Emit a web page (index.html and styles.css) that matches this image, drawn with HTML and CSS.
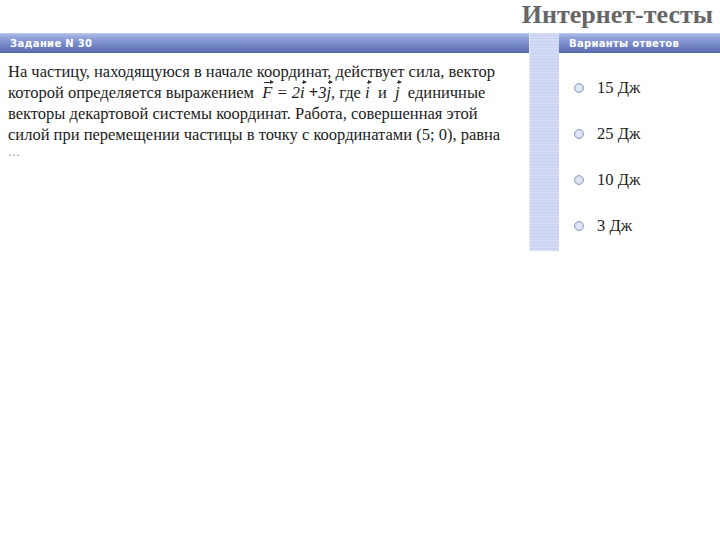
FILE: index.html
```html
<!DOCTYPE html>
<html lang="ru">
<head>
<meta charset="utf-8">
<link rel="stylesheet" href="styles.css">
</head>
<body>
<header class="top">
  <h1 class="brand">Интернет-тесты</h1>
</header>
<main class="board">
  <section class="task">
    <div class="bar"><span class="bar-title">Задание N 30</span></div>
    <p class="question">На частицу, находящуюся в начале координат, действует сила, вектор<br>
    которой определяется выражением&nbsp; <i class="m"><span class="vec">F</span> = 2<span class="vec">i</span> </i><b class="plus">+</b><i class="m">3<span class="vec">j</span></i>, где <i class="m"><span class="vec">i</span></i>&nbsp; и&nbsp; <i class="m"><span class="vec">j</span></i>&nbsp; единичные<br>
    векторы декартовой системы координат. Работа, совершенная этой<br>
    силой при перемещении частицы в точку с координатами (5; 0), равна</p>
    <p class="dots">…</p>
  </section>
  <div class="stripe"></div>
  <section class="answers">
    <div class="bar"><span class="bar-title">Варианты ответов</span></div>
    <ul class="options">
      <li class="opt"><span class="radio"></span>15 Дж</li>
      <li class="opt"><span class="radio"></span>25 Дж</li>
      <li class="opt"><span class="radio"></span>10 Дж</li>
      <li class="opt"><span class="radio"></span>3 Дж</li>
    </ul>
  </section>
</main>
</body>
</html>
```
FILE: styles.css
```css
html, body {
  margin: 0;
  padding: 0;
  background: #ffffff;
}
body {
  width: 720px;
  height: 540px;
  overflow: hidden;
  font-family: "Liberation Serif", "Times New Roman", serif;
  color: #1a1a1a;
}
.top {
  height: 33px;
  display: flex;
  justify-content: flex-end;
  align-items: flex-start;
}
.brand {
  margin: 0;
  padding-right: 7px;
  font-family: "Liberation Serif", serif;
  font-weight: bold;
  font-size: 26px;
  line-height: 29px;
  color: #666666;
}
.board {
  display: flex;
  align-items: flex-start;
}
.task {
  width: 529px;
}
.bar {
  height: 20px;
  background: linear-gradient(to bottom, #c3cff0 0px, #9fb0e0 2px, #8496d2 8px, #6f82c2 13px, #5e70b4 19px, #4f62a8 20px);
  display: flex;
  align-items: center;
}
.bar-title {
  font-family: "DejaVu Sans", sans-serif;
  font-weight: bold;
  font-size: 10px;
  color: #ffffff;
  padding-left: 10px;
  letter-spacing: 0.3px;
}
.question {
  margin: 8px 0 0 8px;
  font-size: 16.5px;
  line-height: 21px;
  color: #1c1c1c;
  white-space: nowrap;
}
.m {
  font-style: italic;
}
.plus {
  font-weight: bold;
  font-style: normal;
}
.vec {
  position: relative;
  display: inline-block;
}
.vec::before {
  content: "";
  position: absolute;
  left: 2px;
  right: -1px;
  top: 0px;
  height: 1px;
  background: #333;
}
.vec::after {
  content: "";
  position: absolute;
  right: -2px;
  top: -2px;
  width: 0;
  height: 0;
  border-left: 4px solid #333;
  border-top: 2.5px solid transparent;
  border-bottom: 2.5px solid transparent;
}
.dots {
  margin: 0 0 0 8px;
  font-size: 12px;
  line-height: 14px;
  color: #8a8a8a;
}
.stripe {
  width: 29px;
  height: 218px;
  background: repeating-linear-gradient(to bottom, #d3daf3 0px, #d3daf3 2px, #c7d0ee 2px, #c7d0ee 3px);
  border-left: 1px solid #e6eaf8;
}
.answers {
  flex: 1;
}
.options {
  list-style: none;
  margin: 0;
  padding: 12px 0 0 15px;
}
.opt {
  display: flex;
  align-items: center;
  height: 46px;
  font-size: 16.5px;
  line-height: 18px;
  color: #1c1c1c;
}
.radio {
  width: 8px;
  height: 8px;
  border-radius: 50%;
  border: 1.5px solid #8a9fc4;
  background: radial-gradient(circle, #e9eef8 0%, #c9d3e8 100%);
  margin-right: 13px;
  flex: none;
}
```
